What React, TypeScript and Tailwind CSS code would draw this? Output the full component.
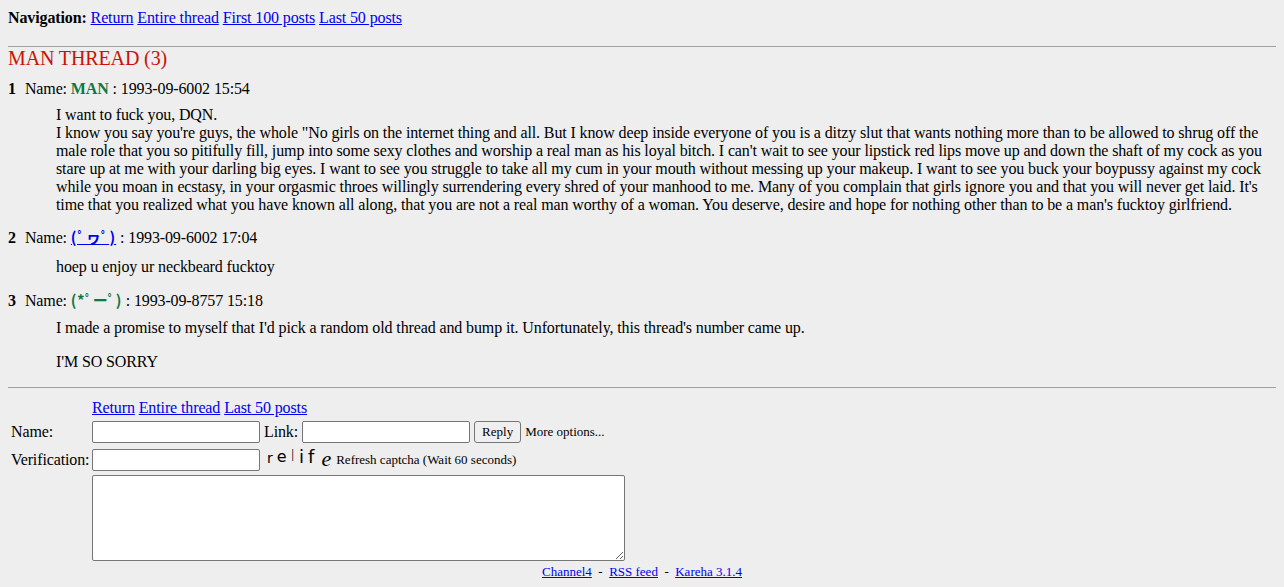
import React from "react";

const serif = { fontFamily: '"Liberation Serif", "Times New Roman", "Noto Sans CJK JP", serif' };

function Header({ n, name, date, link }: { n: number; name: React.ReactNode; date: string; link?: boolean }) {
  return (
    <h3 className="text-base font-normal leading-[18px]">
      <span className="font-bold">{n}</span>
      <span className="ml-[9px]">Name: </span>
      {link ? (
        <a href="#" className="font-bold text-[#0000ee] underline">{name}</a>
      ) : (
        <span className="font-bold text-[#117743]">{name}</span>
      )}
      <span> : {date}</span>
    </h3>
  );
}

const inputCls = "h-[22px] w-[168px] border border-[#767676] bg-white px-[2px] rounded-[2px]";

export default function App() {
  return (
    <div className="min-h-[587px] bg-[#eeeeee] px-2 pt-[9px] text-base leading-[18px] tracking-[-0.12px] text-black" style={serif}>
      <div>
        <b>Navigation:</b>{" "}
        <a href="#" className="text-[#0000ee] underline">Return</a>{" "}
        <a href="#" className="text-[#0000ee] underline">Entire thread</a>{" "}
        <a href="#" className="text-[#0000ee] underline">First 100 posts</a>{" "}
        <a href="#" className="text-[#0000ee] underline">Last 50 posts</a>
      </div>
      <hr className="mt-[19px] border-t border-[#a0a0a0]" />
      <h2 className="mt-0 text-[20px] leading-[22px] font-normal text-[#cc1105]">MAN THREAD (3)</h2>

      <div className="mt-[11px]">
        <Header n={1} name="MAN" date="1993-09-6002 15:54" />
        <div className="ml-12 mt-[8px]">
          <p>I want to fuck you, DQN.</p>
          <p>
            I know you say you're guys, the whole "No girls on the internet thing and all. But I know deep inside everyone of you is a ditzy slut that wants nothing more than to be allowed to shrug off the male role that you so pitifully fill, jump into some sexy clothes and worship a real man as his loyal bitch. I can't wait to see your lipstick red lips move up and down the shaft of my cock as you stare up at me with your darling big eyes. I want to see you struggle to take all my cum in your mouth without messing up your makeup. I want to see you buck your boypussy against my cock while you moan in ecstasy, in your orgasmic throes willingly surrendering every shred of your manhood to me. Many of you complain that girls ignore you and that you will never get laid. It's time that you realized what you have known all along, that you are not a real man worthy of a woman. You deserve, desire and hope for nothing other than to be a man's fucktoy girlfriend.
          </p>
        </div>
      </div>

      <div className="mt-[14px]">
        <Header
          n={2}
          name={<span style={{ fontFamily: '"Noto Sans CJK JP", sans-serif' }} className="text-[15px] tracking-[1px]">(ﾟヮﾟ)</span>}
          date="1993-09-6002 17:04"
          link
        />
        <div className="ml-12 mt-[11px]">
          <p>hoep u enjoy ur neckbeard fucktoy</p>
        </div>
      </div>

      <div className="mt-[15px]">
        <Header
          n={3}
          name={<span style={{ fontFamily: '"Noto Sans CJK JP", sans-serif' }} className="text-[15px] tracking-[0.4px]">(*ﾟーﾟ)</span>}
          date="1993-09-8757 15:18"
        />
        <div className="ml-12 mt-[9px]">
          <p>I made a promise to myself that I'd pick a random old thread and bump it. Unfortunately, this thread's number came up.</p>
          <p className="mt-[16px]">I'M SO SORRY</p>
        </div>
      </div>

      <hr className="mt-[16px] border-t border-[#a0a0a0]" />

      <table className="mt-[8px] border-separate border-spacing-[2px]">
        <tbody>
          <tr className="h-[20px]">
            <td className="w-[80px]"></td>
            <td className="align-middle">
              <a href="#" className="text-[#0000ee] underline">Return</a>{" "}
              <a href="#" className="text-[#0000ee] underline">Entire thread</a>{" "}
              <a href="#" className="text-[#0000ee] underline">Last 50 posts</a>
            </td>
          </tr>
          <tr className="h-[24px]">
            <td className="pl-[1px] align-middle">Name:</td>
            <td className="align-middle">
              <div className="flex items-center">
                <input className={inputCls} />
                <span className="ml-[4px] mr-[4px]">Link:</span>
                <input className={inputCls} />
                <button className="ml-[4px] h-[22px] rounded-[3px] border border-[#767676] bg-[#efefef] px-[7px] text-[13px] leading-[18px] tracking-normal">Reply</button>
                <span className="ml-[4px] text-[13px] tracking-normal">More options...</span>
              </div>
            </td>
          </tr>
          <tr className="h-[27px]">
            <td className="pl-[1px] pt-[1px] align-middle">Verification:</td>
            <td className="pt-[1px] align-middle">
              <div className="flex items-center">
                <input className={inputCls} />
                <span
                  className="ml-[7px] flex h-[20px] items-end gap-[4px] text-black tracking-normal"
                  style={{ fontFamily: '"DejaVu Sans", sans-serif' }}
                >
                  <span className="text-[14px] leading-[14px] -translate-y-[5px]">r</span>
                  <span className="text-[16px] leading-[14px] -translate-y-[6px]">e</span>
                  <span className="text-[16px] leading-[16px] -translate-y-[6px] font-light">l</span>
                  <span className="text-[18px] leading-[16px] -translate-y-[5px]">i</span>
                  <span className="text-[18px] leading-[16px] -translate-y-[5px]">f</span>
                  <span className="ml-[3px] text-[22px] leading-[16px] -translate-y-[3px] italic" style={{ fontFamily: '"Liberation Serif", serif' }}>e</span>
                </span>
                <span className="ml-[5px] text-[13px] tracking-normal">Refresh captcha (Wait 60 seconds)</span>
              </div>
            </td>
          </tr>
          <tr>
            <td></td>
            <td>
              <textarea className="block h-[86px] w-[533px] border border-[#767676] bg-white rounded-[2px]" />
            </td>
          </tr>
        </tbody>
      </table>

      <div className="mt-[1px] text-center text-[13px] leading-[15px] tracking-normal">
        <a href="#" className="text-[#0000ee] underline">Channel4</a>
        <span className="whitespace-pre">{"  -  "}</span>
        <a href="#" className="text-[#0000ee] underline">RSS feed</a>
        <span className="whitespace-pre">{"  -  "}</span>
        <a href="#" className="text-[#0000ee] underline">Kareha 3.1.4</a>
      </div>
    </div>
  );
}
